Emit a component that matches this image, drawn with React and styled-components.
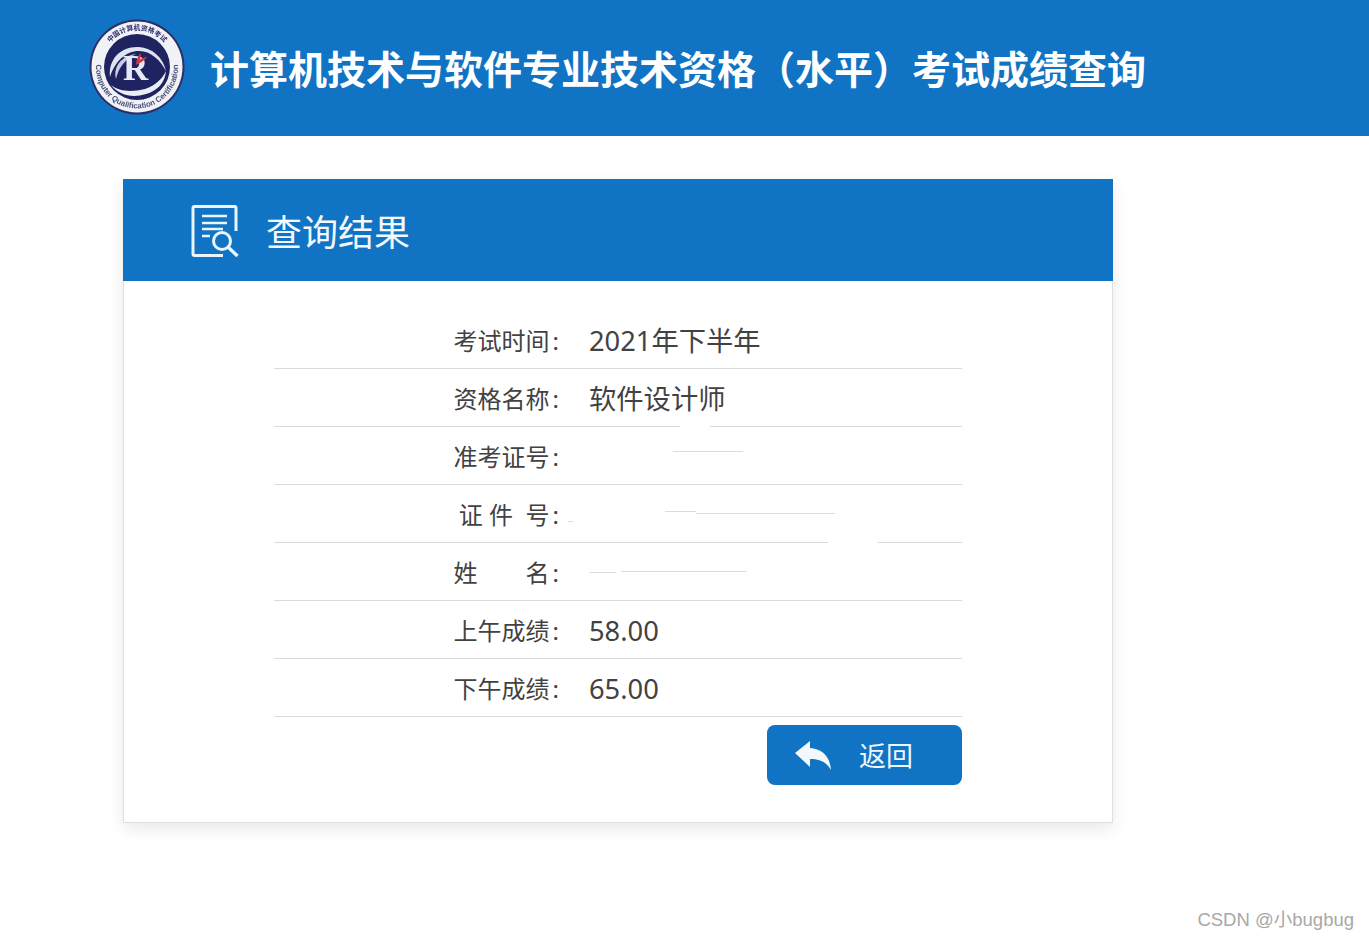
import React from 'react';
import styled, { createGlobalStyle } from 'styled-components';

const rows = [
  { label: '考试时间', value: '2021年下半年' },
  { label: '资格名称', value: '软件设计师', patches: [{ left: 406, width: 30 }] },
  { label: '准考证号', traces: [{ left: 399, top: 24, width: 70 }] },
  {
    label: '证 件\u00a0\u00a0号',
    traces: [
      { left: 391, top: 26, width: 31 },
      { left: 422, top: 28, width: 139 },
      { left: 294, top: 36, width: 5 },
    ],
    patches: [{ left: 554, width: 50 }],
  },
  {
    label: '姓\u3000\u3000名',
    traces: [
      { left: 316, top: 29, width: 26 },
      { left: 347, top: 28, width: 125 },
    ],
  },
  { label: '上午成绩', value: '58.00' },
  { label: '下午成绩', value: '65.00' },
];

const Logo = () => (
  <LogoSvg viewBox="0 0 96 96">
    <defs>
      <path id="logoTop" d="M13 46a35 35 0 0 1 70 0" />
      <path id="logoBottom" d="M7.500 42a41 41 0 1 0 81 0" />
    </defs>
    <circle cx="48" cy="48" r="47.500" fill="#2a2f66" />
    <circle cx="48" cy="48" r="45.500" fill="#f1f2f6" />
    <circle cx="48" cy="48" r="33" fill="#1f2360" />
    <text fontSize="6.800" fontWeight="700" fill="#2a2d6c">
      <textPath href="#logoTop" startOffset="50%" textAnchor="middle">中国计算机资格考试</textPath>
    </text>
    <text fontSize="7.800" fontWeight="700" fill="#4a4d78">
      <textPath href="#logoBottom" startOffset="50%" textAnchor="middle">Computer Qualification Certification</textPath>
    </text>
    <path d="M21 58C19 40 32 27 50 28c13 1 24 10 27 24-6-11-15-20-27-20-13 0-24 10-29 26z" fill="#dfe2ef" />
    <path d="M22 66c9 11 22 13 35 9 11-3 19-11 20-23-4 8-10 14-21 18-13 3-25 3-34-4z" fill="#eceef6" />
    <path d="M27 60c-3-12 5-23 20-25-10 5-17 12-20 25z" fill="#c9cee6" />
    <LogoLetter x="34" y="61" fontSize="35">R</LogoLetter>
    <path d="M47 46c0-5 2-9 5-12 0 3-.500 5-1.500 7 2-2 5-3 8-3-3 3-7 6-11.500 8z" fill="#d8333c" />
  </LogoSvg>
);

const ResultIcon = () => (
  <svg width="48" height="52" viewBox="0 0 48 52" fill="none" stroke="#e9f5fc">
    <path d="M45 26V3c0-1-.500-1.500-1.500-1.500h-40C2.500 1.500 2 2 2 3v46c0 1 .500 1.500 1.500 1.500H32" strokeWidth="3" />
    <path d="M11 11h25M11 18h25M11 24h21M11 31h8" strokeWidth="2.600" />
    <circle cx="31" cy="36" r="8.500" strokeWidth="3" />
    <path d="M37.500 42.500l9 8.500" strokeWidth="3.400" />
  </svg>
);

const ReplyIcon = () => (
  <svg width="36" height="30" viewBox="0 0 36 30" fill="#f2f8fc">
    <path d="M0 13L15 1v7c12 1 20 8 21 22-4-7-10-11-21-11v8z" />
  </svg>
);

const App = () => (
  <Page>
    <GlobalStyle />
    <Header>
      <Logo />
      <SiteTitle>计算机技术与软件专业技术资格（水平）考试成绩查询</SiteTitle>
    </Header>
    <Card>
      <CardHead>
        <ResultIcon />
        <CardTitle>查询结果</CardTitle>
      </CardHead>
      <CardBody>
        {rows.map(({ label, value, traces = [], patches = [] }) => (
          <Row key={label}>
            <Label>
              {label}
              <Colon>:</Colon>
            </Label>
            <Value>{value}</Value>
            {traces.map(t => (
              <Trace key={t.left} $left={t.left} $top={t.top} $width={t.width} />
            ))}
            {patches.map(p => (
              <BorderPatch key={p.left} $left={p.left} $width={p.width} />
            ))}
          </Row>
        ))}
        <Actions>
          <BackButton type="button">
            <ReplyIcon />
            <span>返回</span>
          </BackButton>
        </Actions>
      </CardBody>
    </Card>
    <Watermark>CSDN @小bugbug</Watermark>
  </Page>
);

const GlobalStyle = createGlobalStyle`
  html, body {
    margin: 0;
    background: #fff;
  }
  body {
    font-family: "Noto Sans", "Noto Sans CJK SC", sans-serif;
  }
`;

const Page = styled.div`
  position: relative;
  height: 940px;
  overflow: hidden;
  background: #fff;
`;

const Header = styled.header`
  display: flex;
  align-items: center;
  gap: 25px;
  height: 136px;
  padding: 0 0 2px 89px;
  box-sizing: border-box;
  background: #1173c3;
`;
const LogoSvg = styled.svg`
  display: block;
  width: 96px;
  height: 96px;
  font-family: "Liberation Sans", "Noto Sans CJK SC", sans-serif;
  filter: blur(0.4px);
`;
const LogoLetter = styled.text`
  font-family: "Liberation Serif", serif;
  font-weight: 700;
  fill: #e6e9f3;
`;
const SiteTitle = styled.h1`
  margin: 0;
  padding-top: 2px;
  font-size: 39px;
  line-height: 1;
  font-weight: 700;
  color: #fff;
  white-space: nowrap;
`;

const Card = styled.section`
  width: 990px;
  height: 644px;
  margin: 43px 0 0 123px;
  box-sizing: border-box;
  border: 1px solid #dedede;
  border-top: 0;
  box-shadow: 0 6px 16px rgba(0, 0, 0, 0.09);
`;
const CardHead = styled.div`
  display: flex;
  align-items: center;
  gap: 27px;
  height: 102px;
  margin: 0 -1px;
  padding: 1px 0 0 68px;
  box-sizing: border-box;
  background: #1173c3;
`;
const CardTitle = styled.h2`
  margin: 0;
  padding-top: 4px;
  font-size: 36px;
  line-height: 1;
  font-weight: 400;
  color: #f2f8fc;
`;
const CardBody = styled.div`
  width: 688px;
  margin-left: 150px;
  padding-top: 30px;
`;
const Row = styled.div`
  position: relative;
  display: flex;
  align-items: center;
  gap: 30px;
  height: 58px;
  padding-top: 2px;
  box-sizing: border-box;
  border-bottom: 1px solid #dadada;
  color: #424242;
`;
const Label = styled.span`
  width: 285px;
  font-size: 24px;
  line-height: 1;
  text-align: right;
  white-space: pre;
`;
const Colon = styled.span`
  margin-left: 3px;
`;
const Value = styled.span`
  font-size: 27.300px;
  line-height: 1;
`;
const Trace = styled.i`
  position: absolute;
  left: ${props => props.$left}px;
  top: ${props => props.$top}px;
  width: ${props => props.$width}px;
  height: 1px;
  background: #dcdcdc;
`;
const BorderPatch = styled.i`
  position: absolute;
  left: ${props => props.$left}px;
  bottom: -1px;
  width: ${props => props.$width}px;
  height: 1px;
  background: #fff;
`;

const Actions = styled.div`
  display: flex;
  justify-content: flex-end;
  padding-top: 8px;
`;
const BackButton = styled.button`
  display: flex;
  align-items: center;
  gap: 28px;
  width: 195px;
  height: 60px;
  padding: 0 0 0 28px;
  border: 0;
  border-radius: 8px;
  background: #1173c3;
  color: #eef6fb;
  font-family: inherit;
  font-size: 27px;
  line-height: 1;
`;

const Watermark = styled.div`
  position: absolute;
  right: 15px;
  bottom: 11px;
  font-family: "Liberation Sans", "Noto Sans CJK SC", sans-serif;
  font-size: 18.500px;
  line-height: 1;
  color: #a8a8a8;
`;

export default App;
